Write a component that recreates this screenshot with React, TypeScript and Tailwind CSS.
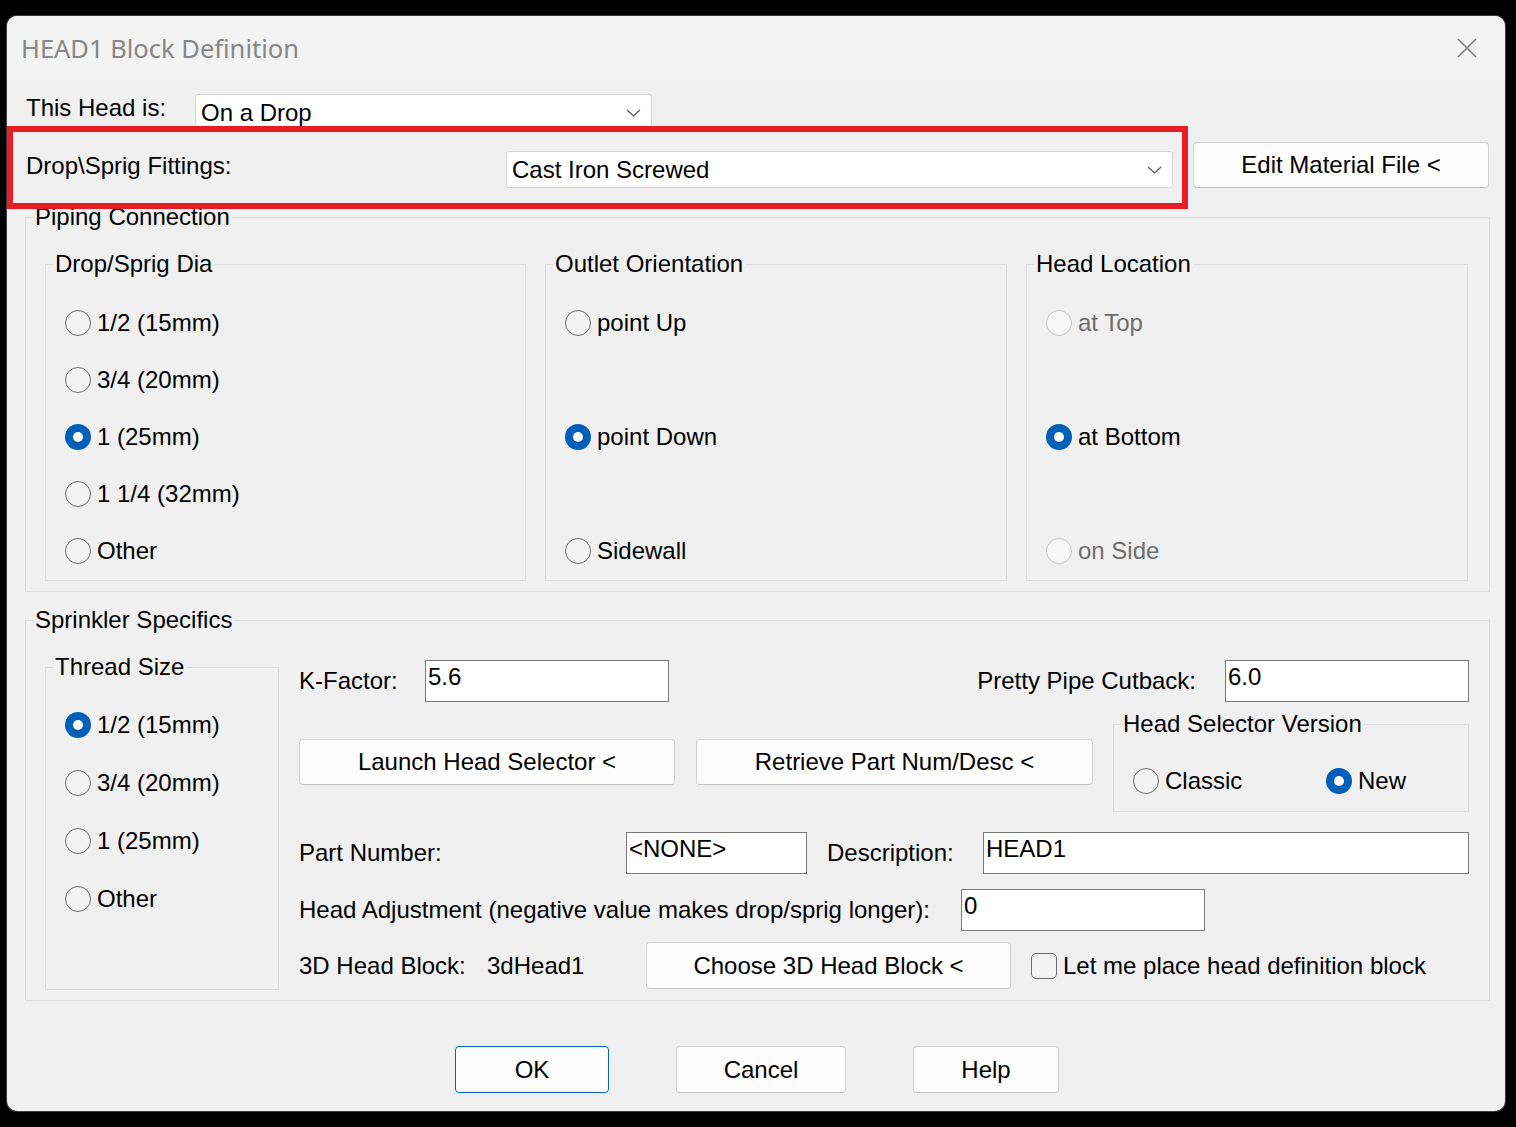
import type { ReactNode } from 'react';

function Radio({ label, checked = false, disabled = false }: { label: string; checked?: boolean; disabled?: boolean }) {
  return (
    <div className="flex items-center gap-[6px]">
      {checked ? (
        <span className="flex h-[26px] w-[26px] items-center justify-center rounded-full bg-[#005fb8]">
          <span className="h-[10px] w-[10px] rounded-full bg-white" />
        </span>
      ) : disabled ? (
        <span className="h-[26px] w-[26px] rounded-full border-[1.5px] border-[#c6c6c6] bg-[#f7f7f7]" />
      ) : (
        <span className="h-[26px] w-[26px] rounded-full border-[1.5px] border-[#6e6e6e] bg-[#f3f3f3]" />
      )}
      <span className={disabled ? 'text-[#6d6d6d]' : 'text-black'}>{label}</span>
    </div>
  );
}

function Group({ title, className, children }: { title: string; className: string; children: ReactNode }) {
  return (
    <fieldset className={`border border-[#dcdcdc] ${className}`}>
      <legend className="ml-[7px] px-[2px] leading-[28px]">{title}</legend>
      {children}
    </fieldset>
  );
}

function Btn({ label, className, primary = false }: { label: string; className: string; primary?: boolean }) {
  return (
    <button
      className={`flex shrink-0 items-center justify-center rounded-[4px] border bg-[#fdfdfd] ${
        primary ? 'border-[#0067c0]' : 'border-[#d0d0d0] border-b-[#c2c2c2]'
      } ${className}`}
    >
      {label}
    </button>
  );
}

function Field({ value, className }: { value: string; className: string }) {
  return (
    <div className={`h-[42px] shrink-0 border border-[#7a7a7a] bg-white pl-[2px] pt-[2px] leading-[28px] ${className}`}>
      {value}
    </div>
  );
}

function Combo({ value, className }: { value: string; className: string }) {
  return (
    <div
      className={`flex shrink-0 items-center justify-between rounded-[3px] border border-[#d6d6d6] bg-white pl-[5px] pr-[10px] ${className}`}
    >
      <span>{value}</span>
      <svg width="15" height="8" viewBox="0 0 15 8">
        <path d="M1 1l6.5 6 6.5-6" stroke="#555" strokeWidth="1.2" fill="none" />
      </svg>
    </div>
  );
}

export default function App() {
  return (
    <div className="min-h-screen w-full bg-black pl-[7px] pt-[16px] font-['Liberation_Sans',Arial,sans-serif] text-[24px] text-black">
      <div className="relative flex h-[1095px] w-[1498px] flex-col overflow-hidden rounded-[10px] bg-[#f0f0f0] shadow-[0_0_0_1px_#3c3c3c]">
        {/* Title bar */}
        <div className="flex h-[64px] shrink-0 items-center justify-between bg-[#f3f3f3] pl-[14px] pr-[28px]">
          <span className="font-['Noto_Sans',sans-serif] text-[25.5px] text-[#878787]">HEAD1 Block Definition</span>
          <svg width="20" height="20" viewBox="0 0 20 20">
            <path d="M1 1L19 19M19 1L1 19" stroke="#7c7c7c" strokeWidth="1.6" />
          </svg>
        </div>

        {/* This Head is */}
        <div className="mt-[14px] flex h-[37px] pl-[19px]">
          <span className="w-[169px] leading-[28px]">This Head is:</span>
          <Combo value="On a Drop" className="h-[37px] w-[457px]" />
        </div>

        {/* Drop\Sprig fittings */}
        <div className="mt-[11px] flex h-[46px] pl-[19px]">
          <span className="mt-[10px] w-[480px] leading-[28px]">Drop\Sprig Fittings:</span>
          <Combo value="Cast Iron Screwed" className="mt-[9px] h-[37px] w-[667px]" />
          <Btn label="Edit Material File <" className="ml-[20px] h-[46px] w-[296px]" />
        </div>

        {/* Piping Connection */}
        <Group title="Piping Connection" className="ml-[18px] mt-[15px] w-[1465px]">
          <div className="mb-[10px] ml-[19px] mt-[19px] flex gap-[19px]">
            <Group title="Drop/Sprig Dia" className="w-[481px]">
              <div className="mt-[16px] flex flex-col pb-[1px] pl-[19px]">
                {['1/2 (15mm)', '3/4 (20mm)', '1 (25mm)', '1 1/4 (32mm)', 'Other'].map((l) => (
                  <div key={l} className="flex h-[57px] items-center">
                    <Radio label={l} checked={l === '1 (25mm)'} />
                  </div>
                ))}
              </div>
            </Group>
            <Group title="Outlet Orientation" className="w-[462px]">
              <div className="mt-[16px] flex h-[285px] flex-col justify-between pl-[19px]">
                <div className="flex h-[57px] items-center">
                  <Radio label="point Up" />
                </div>
                <div className="flex h-[57px] items-center">
                  <Radio label="point Down" checked />
                </div>
                <div className="flex h-[57px] items-center">
                  <Radio label="Sidewall" />
                </div>
              </div>
              <div className="h-[1px]" />
            </Group>
            <Group title="Head Location" className="w-[442px]">
              <div className="mt-[16px] flex h-[285px] flex-col justify-between pl-[19px]">
                <div className="flex h-[57px] items-center">
                  <Radio label="at Top" disabled />
                </div>
                <div className="flex h-[57px] items-center">
                  <Radio label="at Bottom" checked />
                </div>
                <div className="flex h-[57px] items-center">
                  <Radio label="on Side" disabled />
                </div>
              </div>
              <div className="h-[1px]" />
            </Group>
          </div>
        </Group>

        {/* Sprinkler Specifics */}
        <Group title="Sprinkler Specifics" className="ml-[18px] mt-[14px] w-[1465px]">
          <div className="flex">
            <Group title="Thread Size" className="mb-[10px] ml-[19px] mt-[19px] w-[234px] shrink-0">
              <div className="mt-[15px] flex flex-col pb-[61px] pl-[19px]">
                {['1/2 (15mm)', '3/4 (20mm)', '1 (25mm)', 'Other'].map((l) => (
                  <div key={l} className="flex h-[58px] items-center">
                    <Radio label={l} checked={l === '1/2 (15mm)'} />
                  </div>
                ))}
              </div>
            </Group>

            <div className="ml-[20px] flex w-[1170px] flex-col pt-[26px]">
              <div className="flex h-[42px] items-center">
                <span className="w-[126px]">K-Factor:</span>
                <Field value="5.6" className="w-[244px]" />
                <div className="flex-1" />
                <span className="mr-[29px]">Pretty Pipe Cutback:</span>
                <Field value="6.0" className="w-[244px]" />
              </div>

              <div className="mt-[8px] flex items-start">
                <Btn label="Launch Head Selector <" className="mt-[29px] h-[46px] w-[376px]" />
                <Btn label="Retrieve Part Num/Desc <" className="ml-[21px] mt-[29px] h-[46px] w-[397px]" />
                <Group title="Head Selector Version" className="ml-[20px] w-[356px]">
                  <div className="mt-[29px] flex h-[28px] items-center pb-0 pl-[19px]">
                    <div className="w-[193px]">
                      <Radio label="Classic" />
                    </div>
                    <Radio label="New" checked />
                  </div>
                  <div className="h-[16px]" />
                </Group>
              </div>

              <div className="mt-[20px] flex h-[42px] items-center">
                <span className="w-[327px]">Part Number:</span>
                <Field value="<NONE>" className="w-[181px]" />
                <span className="ml-[20px] w-[156px]">Description:</span>
                <Field value="HEAD1" className="w-[486px]" />
              </div>

              <div className="mt-[15px] flex h-[42px] items-center">
                <span className="w-[662px]">Head Adjustment (negative value makes drop/sprig longer):</span>
                <Field value="0" className="w-[244px]" />
              </div>

              <div className="mt-[11px] flex h-[47px] items-center">
                <span className="w-[188px]">3D Head Block:</span>
                <span className="w-[159px]">3dHead1</span>
                <Btn label="Choose 3D Head Block <" className="h-[47px] w-[365px]" />
                <span className="ml-[20px] h-[26px] w-[26px] rounded-[5px] border-[1.5px] border-[#6e6e6e] bg-[#f3f3f3]" />
                <span className="ml-[6px]">Let me place head definition block</span>
              </div>
            </div>
          </div>
        </Group>

        {/* Dialog buttons */}
        <div className="mt-[45px] flex pl-[448px]">
          <Btn label="OK" primary className="h-[47px] w-[154px]" />
          <Btn label="Cancel" className="ml-[67px] h-[47px] w-[170px]" />
          <Btn label="Help" className="ml-[67px] h-[47px] w-[146px]" />
        </div>

        {/* Annotation */}
        <div className="absolute left-0 top-[110px] h-[83px] w-[1181px] border-[6px] border-[#e81c24]" />
      </div>
    </div>
  );
}
